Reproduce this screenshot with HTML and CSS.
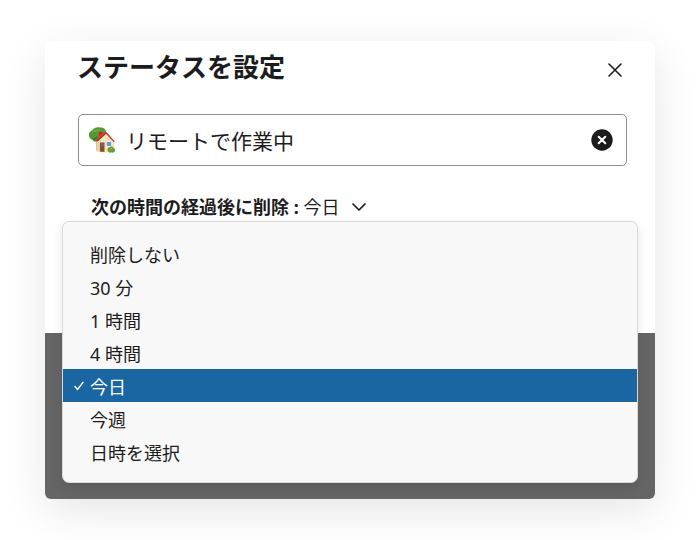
FILE: index.html
```html
<!DOCTYPE html>
<html lang="ja">
<head>
<meta charset="utf-8">
<meta name="viewport" content="width=device-width, initial-scale=1">
<title>ステータスを設定</title>
<link rel="stylesheet" href="styles.css">
</head>
<body>
<main class="dialog" role="dialog" aria-labelledby="dialog-title">
  <header class="dialog-header">
    <h1 class="dialog-title" id="dialog-title">ステータスを設定</h1>
    <button class="icon-button" type="button" aria-label="閉じる">
      <svg width="16" height="16" viewBox="0 0 16 16" fill="none" stroke="currentColor" stroke-width="1.6" stroke-linecap="round"><path d="M2 2l12 12M14 2L2 14"/></svg>
    </button>
  </header>

  <div class="status-field">
    <svg class="emoji" width="28" height="28" viewBox="0 0 28 28" aria-hidden="true">
      <path d="M8 14h3v10H8z" fill="#a58463"/>
      <path d="M1 9C.6 6.500 2.500 5 4.500 4.200 6 1.500 9.500 1 12 1.600c3-.4 5.500 1.200 6 4C18 10 13 15.500 9 15.500c-2 .6-4-.2-4.500-1.700C2.500 13.500.8 11.500 1 9z" fill="#559737"/>
      <path d="M4 6.500c2-3 6-4 9-3-2 2-6 2.500-9 3z" fill="#71ad3f"/>
      <path d="M3 11c2 2 4 1 6-1l1 3c-2 2-4 1.500-5 .5z" fill="#407f2a"/>
      <path d="M11 6h3v5h-3z" fill="#b92825"/>
      <path d="M8.500 14.500L18 7l8 8v10l-9 1.700-8.500-1.500z" fill="#f6e4bf"/>
      <path d="M8.500 14l4-3v14.700l-4-.5z" fill="#e8d2a8"/>
      <path d="M7.500 15L14 6.500l4.500-.5 8.500 9.500-1.400.6-8-8.500-8.700 8z" fill="#ca4438"/>
      <path d="M8.500 14.800L17.500 7l.8.800-8.800 7.600z" fill="#a42d29"/>
      <path d="M12 16.500h4.500v9.500l-4.500-.6z" fill="#8b4b2c"/>
      <path d="M13 17.500h2.500v3H13z" fill="#68717a"/>
      <path d="M18.300 15.500h5.500v5h-5.500z" fill="#fff4d5"/>
      <path d="M18.800 16h4.400v4h-4.400z" fill="#5aa2d6"/>
      <path d="M19.500 24c-.3-1.700 1-2.700 2.200-2.700 1.200-1.400 3.300-.8 3.800.6 1.600.1 2 1.700 1.500 2.700-.2 1.800-2 2.400-3.500 2-2 .6-3.900-.7-4-2.600z" fill="#6c9c34"/>
      <path d="M22 22.500c1-1 2.500-.5 2.800.5-1 .8-2 .5-2.800-.5z" fill="#91bb50"/>
    </svg>
    <input class="status-input" type="text" value="リモートで作業中" aria-label="ステータス">
    <button class="icon-button" type="button" aria-label="ステータスをクリア">
      <svg width="22" height="22" viewBox="0 0 22 22" fill="none"><circle cx="11" cy="11" r="10.700" fill="currentColor"/><path d="M7.700 7.700l6.600 6.600M14.300 7.700l-6.600 6.600" stroke="#fff" stroke-width="2" stroke-linecap="round"/></svg>
    </button>
  </div>

  <div class="expiry">
    <button class="expiry-trigger" type="button" aria-haspopup="menu" aria-expanded="true" aria-controls="expiry-menu">
      <span><strong>次の時間の経過後に削除 :</strong> 今日</span>
      <svg width="16" height="16" viewBox="0 0 16 16" fill="none" stroke="currentColor" stroke-width="1.700" stroke-linecap="round" stroke-linejoin="round"><path d="M2 5l6 6 6-6"/></svg>
    </button>
    <div class="menu" id="expiry-menu" role="menu" aria-label="次の時間の経過後に削除">
      <button class="menu-item" type="button" role="menuitemradio" aria-checked="false">削除しない</button>
      <button class="menu-item" type="button" role="menuitemradio" aria-checked="false">30 分</button>
      <button class="menu-item" type="button" role="menuitemradio" aria-checked="false">1 時間</button>
      <button class="menu-item" type="button" role="menuitemradio" aria-checked="false">4 時間</button>
      <button class="menu-item menu-item-selected" type="button" role="menuitemradio" aria-checked="true"><svg class="check" width="12" height="12" viewBox="0 0 12 12" fill="none" stroke="currentColor" stroke-width="1.400" stroke-linecap="round" stroke-linejoin="round"><path d="M2 6.500l2.500 3L10 2.300"/></svg>今日</button>
      <button class="menu-item" type="button" role="menuitemradio" aria-checked="false">今週</button>
      <button class="menu-item" type="button" role="menuitemradio" aria-checked="false">日時を選択</button>
    </div>
  </div>

  <div class="backdrop"></div>
</main>
</body>
</html>
```
FILE: styles.css
```css
* {
  box-sizing: border-box;
}

body {
  margin: 0;
  padding: 41px 45px;
  background: #fff;
  color: #1d1c1d;
  font-family: "Noto Sans", "Noto Sans CJK JP", sans-serif;
  font-size: 18px;
}

button,
input {
  border: 0;
  padding: 0;
  background: none;
  color: inherit;
  font: inherit;
}

svg {
  display: block;
  flex: none;
}

.dialog {
  border-radius: 6px;
  background: #fff;
  box-shadow: 0 12px 44px rgba(0, 0, 0, 0.1);
}

.dialog-header {
  display: flex;
  align-items: center;
  justify-content: space-between;
  padding: 8px 32px 0;
}

.dialog-title {
  margin: 0;
  font-size: 26px;
  font-weight: 700;
  line-height: 36px;
}

.icon-button {
  display: flex;
}

.dialog-header .icon-button {
  padding-top: 6px;
}

.status-field {
  display: flex;
  align-items: center;
  gap: 10px;
  height: 52px;
  margin: 29px 28px 0 33px;
  padding: 0 13px 0 9px;
  border: 1px solid #8d8d8e;
  border-radius: 5px;
}

.status-input {
  flex: 1;
  min-width: 0;
  padding-top: 1px;
  font-size: 21px;
  line-height: 32px;
  outline: 0;
}

.expiry {
  position: relative;
  padding: 27px 17px 0 46px;
}

.expiry-trigger {
  display: flex;
  align-items: center;
  gap: 12px;
  line-height: 28px;
}

.menu {
  position: absolute;
  top: 55px;
  right: 17px;
  left: 17px;
  padding: 15px 0 14px;
  border: 1px solid #dadada;
  border-radius: 7px;
  background: #f8f8f8;
  box-shadow: 0 4px 12px rgba(0, 0, 0, 0.1);
}

.menu-item {
  position: relative;
  display: block;
  width: 100%;
  padding: 3px 27px 0;
  line-height: 30px;
  text-align: left;
}

.menu-item-selected {
  background: #1966a3;
  color: #fff;
}

.check {
  position: absolute;
  top: 11px;
  left: 10px;
}

.backdrop {
  height: 166px;
  margin-top: 112px;
  border-radius: 0 0 6px 6px;
  background: #656565;
}
```
